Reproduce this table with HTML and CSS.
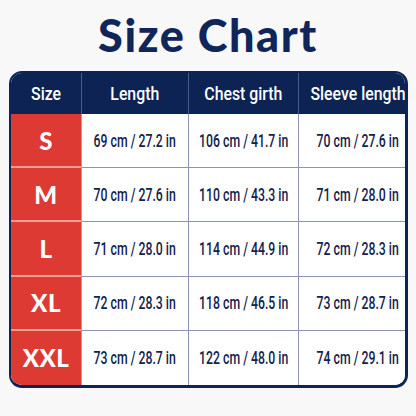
FILE: index.html
```html
<!DOCTYPE html>
<html>
<head>
<meta charset="utf-8">
<link rel="stylesheet" href="styles.css">
</head>
<body>
<h1 class="title">Size Chart</h1>
<div class="chart">
  <div class="cell head"><span class="ht">Size</span></div>
  <div class="cell head"><span class="ht">Length</span></div>
  <div class="cell head"><span class="ht">Chest girth</span></div>
  <div class="cell head last-col"><span class="ht">Sleeve length</span></div>

  <div class="cell size">S</div>
  <div class="cell val"><span class="t">69 cm / 27.2 in</span></div>
  <div class="cell val"><span class="t">106 cm / 41.7 in</span></div>
  <div class="cell val last-col"><span class="t">70 cm / 27.6 in</span></div>

  <div class="cell size">M</div>
  <div class="cell val"><span class="t">70 cm / 27.6 in</span></div>
  <div class="cell val"><span class="t">110 cm / 43.3 in</span></div>
  <div class="cell val last-col"><span class="t">71 cm / 28.0 in</span></div>

  <div class="cell size">L</div>
  <div class="cell val"><span class="t">71 cm / 28.0 in</span></div>
  <div class="cell val"><span class="t">114 cm / 44.9 in</span></div>
  <div class="cell val last-col"><span class="t">72 cm / 28.3 in</span></div>

  <div class="cell size">XL</div>
  <div class="cell val"><span class="t">72 cm / 28.3 in</span></div>
  <div class="cell val"><span class="t">118 cm / 46.5 in</span></div>
  <div class="cell val last-col"><span class="t">73 cm / 28.7 in</span></div>

  <div class="cell size last-row">XXL</div>
  <div class="cell val last-row"><span class="t">73 cm / 28.7 in</span></div>
  <div class="cell val last-row"><span class="t">122 cm / 48.0 in</span></div>
  <div class="cell val last-col last-row"><span class="t">74 cm / 29.1 in</span></div>
</div>
</body>
</html>
```
FILE: styles.css
```css
html, body {
  margin: 0;
  padding: 0;
  background: #f8f8f8;
}
body {
  width: 416px;
  height: 416px;
  overflow: hidden;
}
.title {
  margin: 0;
  padding-top: 10px;
  height: 51px;
  line-height: 51px;
  text-align: center;
  font-family: Lato, "Open Sans", sans-serif;
  font-weight: 900;
  font-size: 45px;
  letter-spacing: 1.6px;
  color: #10255a;
}
.chart {
  margin: 10px 8px 0 9px;
  height: 317px;
  box-sizing: border-box;
  border: 2px solid #0d2454;
  border-right-width: 3px;
  border-bottom-width: 3px;
  border-radius: 13px;
  overflow: hidden;
  display: grid;
  grid-template-columns: 71px 107px 110px 1fr;
  grid-template-rows: 41px repeat(5, 1fr);
  background: #fff;
}
.cell {
  display: flex;
  align-items: center;
  justify-content: center;
  box-sizing: border-box;
  white-space: nowrap;
}
.head {
  background: #0c2354;
  color: #fff;
  border-right: 1px solid #4a5b86;
  font-family: Roboto, "Liberation Sans", sans-serif;
  font-weight: 500;
  font-size: 18px;
}
.ht {
  display: inline-block;
  transform: scaleX(0.88);
}
.size {
  background: #dc3a32;
  color: #fff;
  font-family: Lato, "Open Sans", sans-serif;
  font-weight: 900;
  font-size: 24px;
  letter-spacing: 0.5px;
  border-bottom: 2px solid #ee9f99;
  border-right: 1px solid #9aa2bd;
}
.val {
  background: #fff;
  color: #12224d;
  font-family: Roboto, "Liberation Sans", sans-serif;
  font-weight: 500;
  font-size: 17.5px;
  border-right: 1.5px solid #8c95b2;
  border-bottom: 1.5px solid #8c95b2;
}
.t {
  display: inline-block;
  transform: scaleX(0.7);
}
.last-col {
  border-right: none;
}
.last-row {
  border-bottom: none;
}
```
